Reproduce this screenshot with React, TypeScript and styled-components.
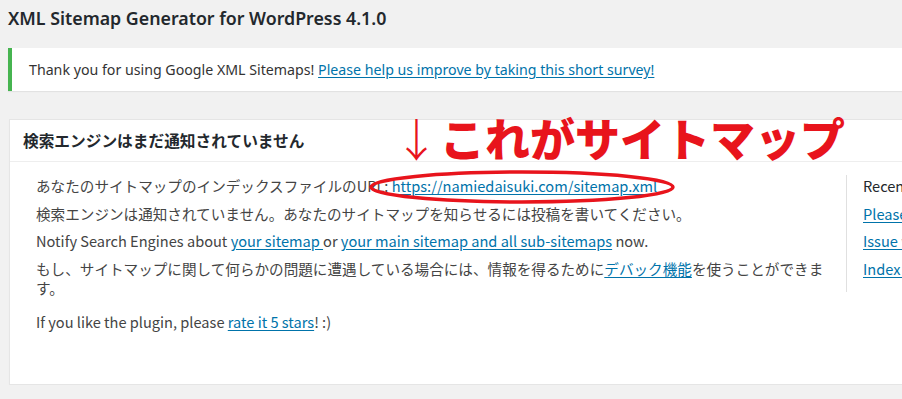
import React from 'react'
import styled, { createGlobalStyle } from 'styled-components'

const GlobalStyle = createGlobalStyle`
  html, body {
    margin: 0;
    padding: 0;
    background: #f1f1f1;
    overflow: hidden;
  }
  body {
    font-family: "Noto Sans CJK JP", "Noto Sans", sans-serif;
    color: #444;
  }
`

const Wrap = styled.div`
  width: 1180px;
  padding: 0 0 0 8px;
`

const PageTitle = styled.h1`
  margin: 0;
  padding-top: 6px;
  font-family: "Noto Sans", "Open Sans", sans-serif;
  font-size: 17.8px;
  font-weight: 600;
  line-height: 25px;
  color: #23282d;
`

const Notice = styled.div`
  margin-top: 17px;
  height: 43px;
  display: flex;
  align-items: center;
  padding: 0 17px;
  background: #fff;
  border-left: 4px solid #46b450;
  box-shadow: 0 1px 1px rgba(0, 0, 0, 0.06);
  font-family: "Noto Sans", "Open Sans", sans-serif;
  font-size: 14.2px;
  color: #333;
`

const Link = styled.a`
  color: #0073aa;
  text-decoration: underline;
  text-underline-offset: 2px;
`

const Postbox = styled.div`
  position: relative;
  margin: 28px 0 0 1px;
  background: #fff;
  border: 1px solid #e5e5e5;
  box-shadow: 0 1px 1px rgba(0, 0, 0, 0.04);
`

const PostboxHeader = styled.h2`
  margin: 0;
  height: 41px;
  display: flex;
  align-items: center;
  padding: 0 13px;
  border-bottom: 1px solid #eee;
  font-size: 15.7px;
  font-weight: 700;
  color: #23282d;
`

const PostboxBody = styled.div`
  display: flex;
  align-items: flex-start;
  padding: 14px 0 45px;
`

const Main = styled.div`
  width: 800px;
  flex-shrink: 0;
  padding: 0 10px 0 26px;
  font-size: 14.6px;
  line-height: 19px;
`

const Para = styled.p<{ $gap?: number }>`
  margin: ${p => p.$gap ?? 0}px 0 8.5px;
`

const Sidebar = styled.div`
  margin-top: -1px;
  width: 300px;
  padding: 1px 0 14.5px 16px;
  border-left: 1px solid #e0e0e0;
  font-size: 14.6px;
  line-height: 19px;
`

const SideHeading = styled.div`
  color: #23282d;
  margin-bottom: 8.5px;
`

const SideItem = styled.div`
  margin-bottom: 8.5px;
  &:last-child {
    margin-bottom: 0;
  }
`

const Annotation = styled.div`
  position: absolute;
  left: 384px;
  top: -10px;
  display: flex;
  align-items: baseline;
  color: #e8141c;
  font-size: 45px;
  line-height: 56px;
  white-space: nowrap;
  pointer-events: none;
`

const Arrow = styled.span`
  font-weight: 300;
  margin-right: 1px;
`

const Callout = styled.span`
  font-weight: 900;
`

const Ring = styled.svg`
  position: absolute;
  left: 359px;
  top: 50px;
  overflow: visible;
  pointer-events: none;
`

export default function App() {
  return (
    <>
      <GlobalStyle />
      <Wrap>
        <PageTitle>XML Sitemap Generator for WordPress 4.1.0</PageTitle>

        <Notice>
          <span>
            Thank you for using Google XML Sitemaps!{' '}
            <Link href="#">Please help us improve by taking this short survey!</Link>
          </span>
        </Notice>

        <Postbox>
          <PostboxHeader>検索エンジンはまだ通知されていません</PostboxHeader>
          <PostboxBody>
            <Main>
              <Para>
                あなたのサイトマップのインデックスファイルのURL:{' '}
                <Link href="#">https://namiedaisuki.com/sitemap.xml</Link>
              </Para>
              <Para>検索エンジンは通知されていません。あなたのサイトマップを知らせるには投稿を書いてください。</Para>
              <Para>
                Notify Search Engines about <Link href="#">your sitemap </Link> or{' '}
                <Link href="#">your main sitemap and all sub-sitemaps</Link> now.
              </Para>
              <Para>
                もし、サイトマップに関して何らかの問題に遭遇している場合には、情報を得るために
                <Link href="#">デバック機能</Link>を使うことができます。
              </Para>
              <Para $gap={15}>
                If you like the plugin, please <Link href="#">rate it 5 stars</Link>! :)
              </Para>
            </Main>
            <Sidebar>
              <SideHeading>Recent Support Topics / News</SideHeading>
              <SideItem><Link href="#">Please help us improve</Link></SideItem>
              <SideItem><Link href="#">Issue with sitemap index</Link></SideItem>
              <SideItem><Link href="#">Index of sitemaps</Link></SideItem>
            </Sidebar>
          </PostboxBody>

          <Annotation>
            <Arrow>↓</Arrow>
            <Callout>これがサイトマップ</Callout>
          </Annotation>
          <Ring width="306" height="34" viewBox="0 0 306 34">
            <ellipse cx="153" cy="17" rx="151" ry="15" fill="none" stroke="#e8141c" strokeWidth="3.5" />
          </Ring>
        </Postbox>
      </Wrap>
    </>
  )
}
